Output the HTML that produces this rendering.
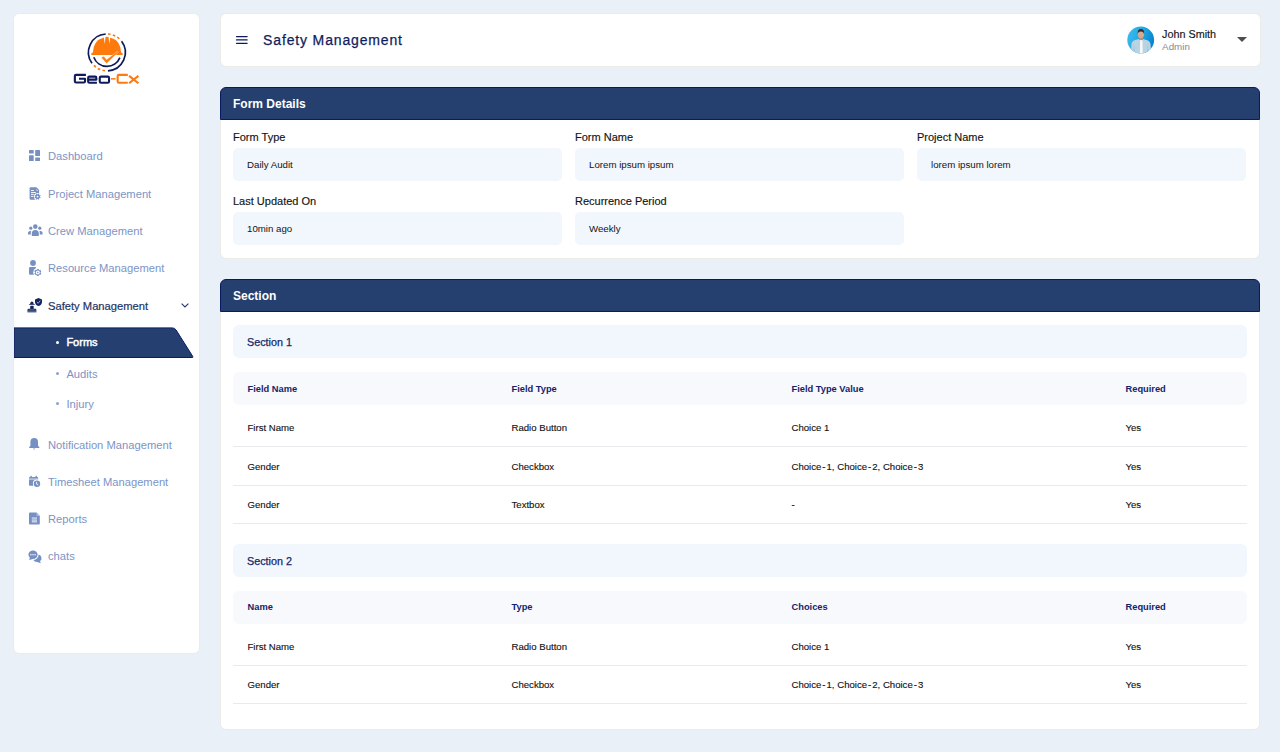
<!DOCTYPE html>
<html><head><meta charset="utf-8">
<style>
*{box-sizing:border-box;margin:0;padding:0}
html,body{width:1280px;height:752px;overflow:hidden}
body{background:#EAF0F8;font-family:"Liberation Sans",sans-serif;position:relative;color:#1a1a1a}
.abs{position:absolute}
.card{position:absolute;background:#fff;border-radius:6px;box-shadow:inset 0 0 0 1px rgba(70,60,50,0.10)}
.sb{left:13px;top:13px;width:187px;height:641px}
.top{left:219.5px;top:13px;width:1041px;height:54px}
.t{position:absolute;white-space:nowrap;line-height:1}
.nav{position:absolute;left:48px;font-size:11.2px;color:#7C94C6;white-space:nowrap;line-height:1}
.ic{position:absolute}
.hdr{position:absolute;left:0;top:0;right:0;height:33px;background:#253F6F;border-radius:6px 6px 0 0;border:1px solid #0B1862}
.hdr span{position:absolute;left:12px;top:9.5px;color:#fff;font-weight:700;font-size:12px;line-height:1}
.lbl{position:absolute;font-size:11px;line-height:1;color:#141414;-webkit-text-stroke:0.15px #141414;white-space:nowrap}
.inp{position:absolute;width:329px;height:33px;background:#F2F6FD;border-radius:5px}
.inp span{position:absolute;left:14px;top:12.2px;font-size:9.7px;line-height:1;color:#141414;white-space:nowrap}
.secbox{position:absolute;left:13px;width:1014px;height:33px;background:#F2F6FD;border-radius:6px}
.secbox span{position:absolute;left:14px;top:12px;font-size:10.8px;line-height:1;color:#172866;-webkit-text-stroke:0.25px #172866;white-space:nowrap}
.th{position:absolute;left:13px;width:1014px;height:33px;background:#F7F9FC;border-radius:6px}
.thx{position:absolute;font-size:9.3px;font-weight:700;line-height:1;color:#15256A;white-space:nowrap;margin-left:.5px}
.td{position:absolute;font-size:9.6px;line-height:1;color:#111;-webkit-text-stroke:0.12px #111;white-space:nowrap;margin-left:.5px}
.ln{position:absolute;left:13px;width:1014px;height:1px;background:#E9EAED}
</style></head><body>

<!-- sidebar -->
<div class="card sb"></div>
<!-- logo -->
<svg class="abs" style="left:70px;top:28px" width="74" height="60" viewBox="70 28 74 60">
  <g fill="none" stroke-linecap="butt">
    <path d="M 92.0 63.2 A 18.4 18.4 0 0 1 105.7 34.0" stroke="#0D1A57" stroke-width="1.7"/>
    <path d="M 121.6 41.3 A 18.4 18.4 0 0 1 107.96 70.78" stroke="#0D1A57" stroke-width="1.7"/>
    <path d="M 108.0 34.0 A 18.4 18.4 0 0 1 121.1 40.6" stroke="#FF7A0D" stroke-width="1.6" stroke-dasharray="2.6 2.3"/>
    <path d="M 105.0 70.8 A 18.4 18.4 0 0 1 93.5 64.9" stroke="#FF7A0D" stroke-width="1.6" stroke-dasharray="2.6 2.3"/>
    <path d="M 93.8 57.2 A 14 14 0 0 0 119.9 57.6" stroke="#0D1A57" stroke-width="1.7"/>
  </g>
  <path d="M 91.3 54.9 L 91.3 53.2 Q 92.2 52.4 92.9 52.4 Q 93.5 40.5 103.8 37.6 L 104.8 44 L 105.5 37 Q 107 36.6 108.6 37 L 109.3 44 L 110.3 37.6 Q 120.5 40.5 121.1 52.4 Q 121.8 52.4 122.6 53.2 L 122.6 54.9 Z" fill="#FF7A0D"/>
  <path d="M 101.2 57.5 L 103.8 56.2 L 106.6 59.6 L 117.2 51.4 L 118.3 52.3 L 106.6 63.6 Z" fill="#FF7A0D" stroke="#fff" stroke-width="0.4"/>
  <g fill="none" stroke-width="2.1" stroke-linejoin="round">
    <path d="M 85.9 74.85 H 76.1 Q 74.85 74.85 74.85 76.1 V 81.2 Q 74.85 82.45 76.1 82.45 H 83.8 Q 85.05 82.45 85.05 81.2 V 78.75 H 79" stroke="#0E1A5A"/>
    <path d="M 96.9 82.75 H 89.4 Q 88.15 82.75 88.15 81.5 V 77.9 Q 88.15 76.65 89.4 76.65 H 95.1 Q 96.35 76.65 96.35 77.9 V 79.6 H 88.5" stroke="#0E1A5A"/>
    <rect x="99.75" y="76.65" width="9.3" height="6.1" rx="1.3" stroke="#0E1A5A"/>
    <path d="M 127.8 74.85 H 118.9 Q 117.65 74.85 117.65 76.1 V 81.5 Q 117.65 82.75 118.9 82.75 H 127.8" stroke="#FF7A0D"/>
    <path d="M 129.1 75.9 L 138.4 83.3 M 138.4 75.9 L 129.1 83.3" stroke="#FF7A0D" stroke-linecap="butt"/>
  </g>
  <rect x="111" y="78.1" width="4.7" height="1.5" fill="#FF7A0D"/>
</svg>

<!-- nav -->
<svg class="ic" style="left:29px;top:150px" width="12" height="12" viewBox="0 0 12 12" fill="#7690C4"><rect x="0" y="0.1" width="4.7" height="3.5" rx=".5"/><rect x="0" y="5.2" width="4.7" height="5.7" rx=".5"/><rect x="6.2" y="0.1" width="4.8" height="5.9" rx=".5"/><rect x="6.2" y="7.6" width="4.8" height="3.3" rx=".5"/></svg>
<div class="nav" style="top:151.2px">Dashboard</div>

<svg class="ic" style="left:26px;top:184px" width="18" height="18" viewBox="26 184 18 18"><path d="M30.6 187.3 H36.4 L39.1 190 V198.7 A1 1 0 0 1 38.1 199.7 H30.6 A1 1 0 0 1 29.6 198.7 V188.3 A1 1 0 0 1 30.6 187.3Z" fill="#7690C4"/><circle cx="37.6" cy="196.6" r="3.7" fill="#fff"/><path d="M36.1 188.9 Q36.1 191.2 38.4 191.2 L36.1 188.9Z" fill="#fff"/><g fill="#fff"><rect x="31" y="190.1" width="2.9" height="0.9"/><rect x="31" y="192" width="4.8" height="0.9"/><rect x="31" y="193.9" width="2.9" height="0.9"/><rect x="31" y="195.9" width="2.4" height="0.9"/></g><path d="M39.92 196.96 L40.63 197.26 L40.21 198.27 L39.50 197.99 L38.99 198.50 L39.27 199.21 L38.26 199.63 L37.96 198.92 L37.24 198.92 L36.94 199.63 L35.93 199.21 L36.21 198.50 L35.70 197.99 L34.99 198.27 L34.57 197.26 L35.28 196.96 L35.28 196.24 L34.57 195.94 L34.99 194.93 L35.70 195.21 L36.21 194.70 L35.93 193.99 L36.94 193.57 L37.24 194.28 L37.96 194.28 L38.26 193.57 L39.27 193.99 L38.99 194.70 L39.50 195.21 L40.21 194.93 L40.63 195.94 L39.92 196.24Z" fill="#7690C4"/><circle cx="37.6" cy="196.6" r="0.9" fill="#fff"/></svg>
<div class="nav" style="top:188.6px">Project Management</div>

<svg class="ic" style="left:28px;top:224px" width="15" height="13" viewBox="0 0 15 13" fill="#7690C4"><circle cx="7.3" cy="2.6" r="2.3"/><circle cx="2.8" cy="4.2" r="1.6"/><circle cx="11.8" cy="4.2" r="1.6"/><path d="M3.8 12 V9.5 A3.5 3.5 0 0 1 10.8 9.5 V12 Z"/><path d="M0 10.5 V9 A2.2 2.2 0 0 1 3.3 7.2 A4.2 4.2 0 0 0 2.8 9.5 V10.5Z"/><path d="M14.6 10.5 V9 A2.2 2.2 0 0 0 11.3 7.2 A4.2 4.2 0 0 1 11.8 9.5 V10.5Z"/></svg>
<div class="nav" style="top:226.1px">Crew Management</div>

<svg class="ic" style="left:25px;top:258px" width="20" height="20" viewBox="25 258 20 20"><circle cx="33" cy="263" r="2.9" fill="#7690C4"/><path d="M30.2 274.8 A1.2 1.2 0 0 1 29 273.6 V268.4 A1.4 1.4 0 0 1 30.4 267 H35.9 V274.8Z" fill="#7690C4"/><circle cx="37.8" cy="272.4" r="4.6" fill="#fff"/><path d="M40.65 272.91 L41.28 273.33 L40.35 274.95 L39.67 274.62 L38.78 275.13 L38.73 275.88 L36.87 275.88 L36.82 275.13 L35.93 274.62 L35.25 274.95 L34.32 273.33 L34.95 272.91 L34.95 271.89 L34.32 271.47 L35.25 269.85 L35.93 270.18 L36.82 269.67 L36.87 268.92 L38.73 268.92 L38.78 269.67 L39.67 270.18 L40.35 269.85 L41.28 271.47 L40.65 271.89Z" fill="#7690C4"/><circle cx="37.8" cy="272.4" r="2" fill="#fff"/><path d="M37.2 271.4 L38.9 272.4 L37.2 273.4Z" fill="#7690C4"/></svg>
<div class="nav" style="top:263.4px">Resource Management</div>

<svg class="ic" style="left:25px;top:295px" width="20" height="20" viewBox="25 295 20 20"><defs><linearGradient id="bdg" x1="0" y1="0" x2="0" y2="1"><stop offset="0" stop-color="#14245E"/><stop offset="1" stop-color="#6C789C"/></linearGradient></defs><path d="M38.5 298.1 L42 299.4 V302 Q42 304.9 38.5 306.1 Q35 304.9 35 302 V299.4 Z" fill="#14245E"/><path d="M36.9 302.1 L38.2 303.3 L40.2 300.7" stroke="#C9D0E0" stroke-width="0.8" fill="none"/><path d="M30.1 304.2 Q30.1 301.6 31.9 301.6 Q33.7 301.6 33.7 304.2 Z" fill="#14245E"/><rect x="29" y="303.9" width="5.8" height="0.9" rx=".3" fill="#14245E"/><rect x="30.2" y="305.7" width="3.5" height="3.7" rx="0.9" fill="#14245E"/><path d="M27.4 312.6 V310.2 Q27.4 308.8 28.8 308.8 H35 Q36.4 308.8 36.4 310.2 V312.6 Z" fill="url(#bdg)"/><rect x="29.6" y="309.2" width="4.6" height="0.8" fill="#8E97B5" opacity=".5"/></svg>
<div class="nav" style="top:300.8px;color:#1F3466;-webkit-text-stroke:0.2px #1F3466">Safety Management</div>
<svg class="ic" style="left:181px;top:303px" width="8" height="5" viewBox="0 0 8 5"><path d="M0.6 0.6 L4 4 L7.4 0.6" stroke="#243A6C" stroke-width="1.1" fill="none"/></svg>

<svg class="abs" style="left:13.7px;top:327px" width="181" height="31" viewBox="0 0 181 31"><path d="M0 0.9 H158.3 Q160.8 0.9 162.1 3 L178.8 29.5 Q179.3 30.5 178.3 30.5 H0Z" fill="#253F70" stroke="#0E1D5E" stroke-width="1"/></svg>
<div class="abs" style="left:56.4px;top:340.5px;width:3px;height:3px;border-radius:50%;background:#fff"></div>
<div class="nav" style="left:66.4px;top:336.9px;color:#fff;font-size:11px;-webkit-text-stroke:0.45px #fff">Forms</div>
<div class="abs" style="left:56.4px;top:371.6px;width:3px;height:3px;border-radius:50%;background:#8DA2CE"></div>
<div class="nav" style="left:66.4px;top:368.8px">Audits</div>
<div class="abs" style="left:56.4px;top:402.3px;width:3px;height:3px;border-radius:50%;background:#8DA2CE"></div>
<div class="nav" style="left:66.4px;top:399.4px">Injury</div>

<svg class="ic" style="left:29px;top:437px" width="11" height="13" viewBox="0 0 11 13" fill="#7690C4"><path d="M5.2 1 A3.8 3.8 0 0 1 9 4.8 V8.8 L10.3 10 V11 H0.2 V10 L1.4 8.8 V4.8 A3.8 3.8 0 0 1 5.2 1Z"/><path d="M4.2 11.6 H6.2 A1 1 0 0 1 4.2 11.6Z"/></svg>
<div class="nav" style="top:439.6px">Notification Management</div>

<svg class="ic" style="left:25px;top:472px" width="20" height="20" viewBox="25 472 20 20"><rect x="30.4" y="475.7" width="1.4" height="2" rx=".4" fill="#7690C4"/><rect x="35.5" y="475.7" width="1.4" height="2" rx=".4" fill="#7690C4"/><rect x="29" y="477" width="9.1" height="8.8" rx=".7" fill="#7690C4"/><rect x="29" y="478.3" width="9.1" height="1.6" fill="#B5C4E3"/><circle cx="37" cy="483.7" r="4.1" fill="#fff"/><circle cx="37" cy="483.7" r="3.2" fill="#7690C4"/><path d="M36.6 481.9 V484.1 L38.2 485" stroke="#fff" stroke-width="0.9" fill="none"/></svg>
<div class="nav" style="top:476.8px">Timesheet Management</div>

<svg class="ic" style="left:29px;top:512px" width="12" height="13" viewBox="0 0 12 13" fill="#7690C4"><path d="M1 0.6 H7.5 L10.8 3.9 V11.4 A1 1 0 0 1 9.8 12.4 H1 A1 1 0 0 1 0 11.4 V1.6 A1 1 0 0 1 1 0.6Z"/><path d="M7.5 0.6 V3.9 H10.8" fill="#A9BADD"/><rect x="2.8" y="5.6" width="5.2" height="0.9" fill="#fff"/><rect x="2.8" y="7.6" width="5.2" height="0.9" fill="#fff"/><rect x="2.8" y="9.4" width="5.2" height="0.9" fill="#fff"/></svg>
<div class="nav" style="top:514.0px">Reports</div>

<svg class="ic" style="left:28px;top:549.8px" width="14" height="14" viewBox="0 0 14 14" fill="#7690C4"><path d="M5 0.6 A4.6 4.2 0 0 1 9.6 4.8 A4.6 4.2 0 0 1 5 9 L1.2 10 L1.8 7.6 A4.1 4.1 0 0 1 0.4 4.8 A4.6 4.2 0 0 1 5 0.6Z"/><circle cx="2.9" cy="4.8" r=".7" fill="#fff"/><circle cx="5" cy="4.8" r=".7" fill="#fff"/><circle cx="7.1" cy="4.8" r=".7" fill="#fff"/><path d="M10.6 4.6 A3.8 3.6 0 0 1 12 11 L12.8 13.3 L9.2 12.1 A4 4 0 0 1 5.4 10.1 A5.8 5.4 0 0 0 10.6 4.6Z"/></svg>
<div class="nav" style="top:551.3px">chats</div>


<!-- topbar -->
<div class="card top">
  <svg class="abs" style="left:0;top:0" width="40" height="40" viewBox="219.5 13 40 40"><g stroke="#0E1A5A" stroke-width="1.25" stroke-linecap="round"><line x1="236" y1="36.5" x2="246.6" y2="36.5"/><line x1="236" y1="39.9" x2="246.6" y2="39.9"/><line x1="236" y1="43.3" x2="246.6" y2="43.3"/></g></svg>
  <div class="t" style="left:43.6px;top:19.7px;font-size:14px;letter-spacing:0.85px;color:#101D5C;-webkit-text-stroke:0.25px #101D5C">Safety Management</div>
  <svg class="abs" style="left:0;top:0" width="1041" height="53" viewBox="219.5 13 1041 53">
  <defs><linearGradient id="avg" x1="0" y1="0" x2="1" y2="0.3"><stop offset="0" stop-color="#41BDEE"/><stop offset="0.6" stop-color="#1EA7E4"/><stop offset="1" stop-color="#0A86D0"/></linearGradient><clipPath id="avc"><circle cx="1140.8" cy="40" r="13.4"/></clipPath></defs>
  <g transform="translate(-0.6 0)"><circle cx="1140.8" cy="40" r="13.4" fill="url(#avg)"/>
  <g clip-path="url(#avc)">
    <path d="M1131 55 L1131.6 44 Q1132 40.8 1135.5 40 L1139 39 H1143 L1146.5 40 Q1150 40.8 1150.6 44 L1151.5 55Z" fill="#B9D3E3"/>
    <path d="M1140.2 40.2 H1142.6 L1142.8 55 H1140 Z" fill="#F6F8FA"/>
    <rect x="1139.2" y="36.5" width="3.8" height="3.5" fill="#B98C74"/>
    <ellipse cx="1141" cy="34.6" rx="3.1" ry="3.7" fill="#D6A88E"/>
    <path d="M1137.8 34 Q1137.4 29.2 1141 29.1 Q1144.6 29.2 1144.2 34 Q1143.6 31.4 1141 31.6 Q1138.4 31.4 1137.8 34Z" fill="#3A2A22"/>
    <path d="M1134 43 L1135 55 H1133.5Z M1148 43 L1147 55 H1148.5Z" fill="#8FB2C8" opacity=".6"/>
  </g></g>
</svg>
  <div class="t" style="left:942.6px;top:16.2px;font-size:10.8px;color:#161616;-webkit-text-stroke:0.15px #161616">John Smith</div>
  <div class="t" style="left:942.6px;top:29px;font-size:9.8px;color:#8a8a8a">Admin</div>
  <div class="abs" style="left:1017.5px;top:23.5px;width:0;height:0;border-left:5px solid transparent;border-right:5px solid transparent;border-top:5px solid #4d4d4d"></div>
</div>

<!-- form details -->
<div class="card" style="left:220px;top:87px;width:1040px;height:172px">
  <div class="hdr"><span>Form Details</span></div>
  <div class="lbl" style="left:13px;top:45.4px">Form Type</div>
  <div class="inp" style="left:13px;top:61px"><span>Daily Audit</span></div>
  <div class="lbl" style="left:355px;top:45.4px">Form Name</div>
  <div class="inp" style="left:355px;top:61px"><span>Lorem ipsum ipsum</span></div>
  <div class="lbl" style="left:697px;top:45.4px">Project Name</div>
  <div class="inp" style="left:697px;top:61px"><span>lorem ipsum lorem</span></div>
  <div class="lbl" style="left:13px;top:109.4px">Last Updated On</div>
  <div class="inp" style="left:13px;top:125px"><span>10min ago</span></div>
  <div class="lbl" style="left:355px;top:109.4px">Recurrence Period</div>
  <div class="inp" style="left:355px;top:125px"><span>Weekly</span></div>
</div>

<!-- section -->
<div class="card" style="left:220px;top:279px;width:1040px;height:451px">
  <div class="hdr"><span>Section</span></div>
  <div class="secbox" style="top:46px"><span>Section 1</span></div>
  <div class="th" style="top:93px"></div>
  <div class="thx" style="left:27px;top:105.53px">Field Name</div>
  <div class="thx" style="left:291px;top:105.53px">Field Type</div>
  <div class="thx" style="left:571px;top:105.53px">Field Type Value</div>
  <div class="thx" style="left:905px;top:105.53px">Required</div>
  <div class="td" style="left:27px;top:144.27px">First Name</div>
  <div class="td" style="left:291px;top:144.27px">Radio Button</div>
  <div class="td" style="left:571px;top:144.27px">Choice 1</div>
  <div class="td" style="left:905px;top:144.27px">Yes</div>
  <div class="td" style="left:27px;top:182.67px">Gender</div>
  <div class="td" style="left:291px;top:182.67px">Checkbox</div>
  <div class="td" style="left:571px;top:182.67px">Choice<span style="margin:0 -1.7px"> - </span>1, Choice<span style="margin:0 -1.7px"> - </span>2, Choice<span style="margin:0 -1.7px"> - </span>3</div>
  <div class="td" style="left:905px;top:182.67px">Yes</div>
  <div class="td" style="left:27px;top:221.27px">Gender</div>
  <div class="td" style="left:291px;top:221.27px">Textbox</div>
  <div class="td" style="left:571px;top:221.27px">-</div>
  <div class="td" style="left:905px;top:221.27px">Yes</div>
  <div class="ln" style="top:167px"></div>
  <div class="ln" style="top:206px"></div>
  <div class="ln" style="top:244px"></div>
  <div class="secbox" style="top:265px"><span>Section 2</span></div>
  <div class="th" style="top:312px"></div>
  <div class="thx" style="left:27px;top:324.43px">Name</div>
  <div class="thx" style="left:291px;top:324.43px">Type</div>
  <div class="thx" style="left:571px;top:324.43px">Choices</div>
  <div class="thx" style="left:905px;top:324.43px">Required</div>
  <div class="td" style="left:27px;top:362.67px">First Name</div>
  <div class="td" style="left:291px;top:362.67px">Radio Button</div>
  <div class="td" style="left:571px;top:362.67px">Choice 1</div>
  <div class="td" style="left:905px;top:362.67px">Yes</div>
  <div class="td" style="left:27px;top:401.27px">Gender</div>
  <div class="td" style="left:291px;top:401.27px">Checkbox</div>
  <div class="td" style="left:571px;top:401.27px">Choice<span style="margin:0 -1.7px"> - </span>1, Choice<span style="margin:0 -1.7px"> - </span>2, Choice<span style="margin:0 -1.7px"> - </span>3</div>
  <div class="td" style="left:905px;top:401.27px">Yes</div>
  <div class="ln" style="top:386px"></div>
  <div class="ln" style="top:424px"></div>
</div>

</body></html>
